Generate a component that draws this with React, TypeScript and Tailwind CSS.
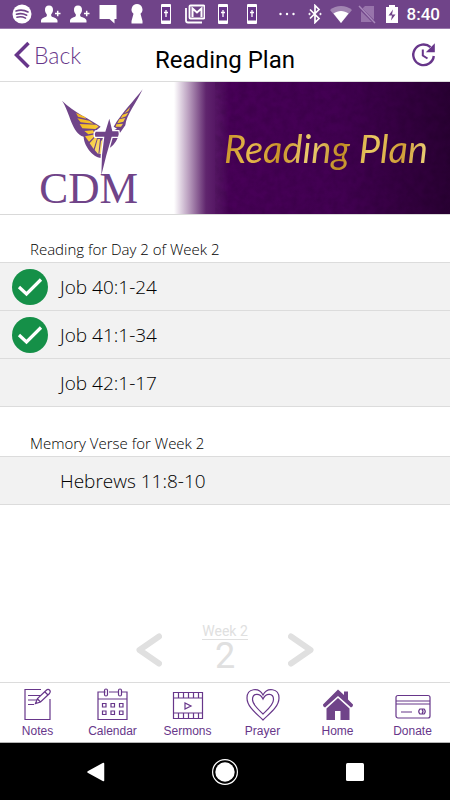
import React from 'react';

interface Reading {
  id: string;
  label: string;
  done: boolean;
}

const readings: Reading[] = [
  { id: 'job-40', label: 'Job 40:1-24', done: true },
  { id: 'job-41', label: 'Job 41:1-34', done: true },
  { id: 'job-42', label: 'Job 42:1-17', done: false },
];

const memoryVerses: Reading[] = [{ id: 'heb-11', label: 'Hebrews 11:8-10', done: false }];

/* ---------- Status bar ---------- */

const AddPersonIcon = () => (
  <svg className="h-5 w-5" viewBox="0 0 20 20" fill="white">
    <path d="M8 1.500c2.800 0 4.200 1.900 4 4.700-.1 1.700-.9 3.200-1.800 4v1.800c.8 1.400 6.300 1.800 6.300 4.800V18.500H0v-1.700c0-3 5-3.400 5.800-4.800v-1.800c-.9-.8-1.700-2.300-1.800-4C3.800 3.400 5.200 1.500 8 1.500z" />
    <path d="M14 9.500h5.500M16.700 6.800v5.400" stroke="white" strokeWidth="1.500" />
  </svg>
);

const CrossPhoneIcon = () => (
  <svg className="h-5 w-5" viewBox="0 0 20 20">
    <rect x="5" y="0" width="10" height="20" rx="1" fill="white" />
    <rect x="6" y="3" width="8" height="13.500" fill="#68358a" />
    <path d="M10 6v7M8 8.500h4" stroke="white" strokeWidth="1.300" />
  </svg>
);

const StatusBar = () => (
  <div className="flex h-[29px] shrink-0 items-center border-b border-[#9a78ac] bg-[#704489] pl-3 pr-[10px] text-white">
    <div className="flex w-[250px] items-center justify-between">
      <svg className="h-5 w-5" viewBox="0 0 20 20">
        <circle cx="10" cy="10" r="9.500" fill="white" />
        <path d="M4 7c4-1.300 8.500-.9 12 1M4.500 10.200c3.500-1 7-.7 10.200 1M5 13.200c3-.8 5.800-.5 8.500.9" fill="none" stroke="#704489" strokeWidth="1.600" strokeLinecap="round" />
      </svg>
      <AddPersonIcon />
      <AddPersonIcon />
      <svg className="h-5 w-5" viewBox="0 0 20 20" fill="white">
        <path d="M1.500 1h17v14h-2v4.500l-5-4.500h-10z" />
      </svg>
      <svg className="h-5 w-5" viewBox="0 0 20 20" fill="white">
        <path d="M10 0a5.500 5.500 0 0 1 3.500 9.700L15.500 17v2.500h-11V17l2-7.300A5.500 5.500 0 0 1 10 0z" />
      </svg>
      <CrossPhoneIcon />
      <svg className="h-5 w-5" viewBox="0 0 20 20" fill="none" stroke="white">
        <path d="M1 4v12.500q0 2 2 2h14" strokeWidth="1.800" />
        <rect x="4.500" y="1.500" width="15" height="13" rx="1" strokeWidth="1.800" />
        <path d="M7.500 13V4.500l4.500 4 4.500-4V13" strokeWidth="2" />
      </svg>
      <CrossPhoneIcon />
      <CrossPhoneIcon />
    </div>
    <svg className="ml-4 h-5 w-[18px]" viewBox="0 0 18 20" fill="white">
      <circle cx="2.500" cy="10" r="1.200" />
      <circle cx="9" cy="10" r="1.200" />
      <circle cx="15.500" cy="10" r="1.200" />
    </svg>
    <div className="ml-auto flex items-center gap-[5px]">
      <svg className="h-5 w-5" viewBox="0 0 20 20" fill="none" stroke="white" strokeWidth="1.700">
        <path d="M5 5.500l9 9-4 4V1.500l4 4-9 9" />
        <circle cx="4.500" cy="10" r=".7" fill="white" strokeWidth="1" />
        <circle cx="15.500" cy="10" r=".7" fill="white" strokeWidth="1" />
      </svg>
      <svg className="h-5 w-[22px]" viewBox="0 0 22 20" fill="white">
        <path d="M0 6C6 .5 16 .5 22 6L11 19z" opacity=".35" />
        <path d="M3.500 9.500C8 6 14 6 18.500 9.500L11 19z" />
      </svg>
      <svg className="h-5 w-5" viewBox="0 0 20 20">
        <path d="M8 2h9v16H4V6z" fill="#9874ab" />
        <path d="M1 2l17 17" stroke="#704489" strokeWidth="3" />
        <path d="M2 2l16 17" stroke="#a98abb" strokeWidth="1.400" />
      </svg>
      <svg className="h-5 w-5" viewBox="0 0 20 20">
        <path d="M7 1h6v2h3v16H4V3h3z" fill="white" />
        <path d="M11 5.500l-4.500 6H10L9 16.500l4.500-6H10z" fill="#704489" />
      </svg>
      <span className="font-['Roboto',sans-serif] text-[17px] font-medium leading-5">8:40</span>
    </div>
  </div>
);

/* ---------- Header and banner ---------- */

const Header = () => (
  <header className="grid h-[53px] shrink-0 grid-cols-[1fr_auto_1fr] items-center border-b border-[#dcdcdc] bg-white px-[14px]">
    <button type="button" className="flex items-center gap-1 text-[#67368a]">
      <svg className="h-7 w-4" viewBox="0 0 16 28" fill="none" stroke="currentColor" strokeWidth="3.500">
        <path d="M14.500 2L2.500 14l12 12" />
      </svg>
      <span className="font-['Lato',sans-serif] text-[23px] font-light leading-7">Back</span>
    </button>
    <h1 className="pt-[10px] font-['Roboto',sans-serif] text-2xl leading-7 text-black">Reading Plan</h1>
    <button type="button" aria-label="History" className="justify-self-end text-[#67368a]">
      <svg className="h-[26px] w-[26px]" viewBox="0 0 26 26" fill="none" stroke="currentColor" strokeWidth="2.400">
        <path d="M20.500 5.200A10.300 10.300 0 1 0 23.800 14" />
        <path d="M24.800 1.200v9h-9z" fill="currentColor" stroke="none" />
        <path d="M12.800 7.500v6l4.700 3" strokeWidth="2" />
      </svg>
    </button>
  </header>
);

const Logo = () => (
  <svg className="h-[132px] w-[110px] shrink-0" viewBox="114 0 330 396" role="img" aria-label="CDM">
    <defs>
      <linearGradient id="wing" x1="0" y1="0" x2="1" y2="1">
        <stop offset="0" stopColor="#f1b51c" />
        <stop offset=".5" stopColor="#f6c62c" />
        <stop offset="1" stopColor="#fbe487" />
      </linearGradient>
    </defs>
    <path d="M186 56C210 92 216 155 251 164C251 187 275 225 304 228L313 160L284 149L302 134C271 111 222 92 186 56z" fill="#704489" />
    <path d="M228 93L254 104L259 110L234 104zM232 109L268 116L280 125L242 121zM239 126L289 128L296 134L286 141L247 139zM253 147L279 145L283 153L265 157zM255 163L279 158L284 163L267 179zM269 184L285 166L291 169L281 201zM284 204L293 171L300 171L295 217zM298 216L303 178L309 170L305 216z" fill="url(#wing)" />
    <path d="M428 22C403 55 364 94 341 134L351 140L331 149L328 199C348 184 353 169 356 158L376 130C379 99 410 61 428 22z" fill="#704489" />
    <path d="M391 74L373 94L385 87zM385 92L368 98L362 109L378 103zM376 108L358 112L352 124L370 119zM369 125L349 127L347 134L363 134z" fill="url(#wing)" />
    <path d="M328 110L337 148H355Q358 156 354 164H335L319 220L304 280L306 220L313 164H286Q282 156 287 149H316z" fill="#704489" stroke="white" strokeWidth="8" paintOrder="stroke" />
    <text x="118" y="362" fontFamily="'Liberation Serif', serif" fontSize="130" fill="#704489">
      CDM
    </text>
  </svg>
);

const Banner = () => (
  <section className="relative flex h-[133px] shrink-0 items-center justify-between border-b border-[#d9d9d9] bg-[linear-gradient(to_right,white_174px,#b89cbd_189px,#5f256d_206px,#480058_230px,#420052_340px,#2a0034_450px)] pl-[38px] pr-[22px]">
    <svg className="absolute inset-y-0 right-0 h-full w-[calc(100%-215px)] opacity-10" aria-hidden="true">
      <filter id="grain">
        <feTurbulence type="fractalNoise" baseFrequency=".12" numOctaves="4" seed="4" />
        <feColorMatrix values="0 0 0 0 0  0 0 0 0 0  0 0 0 0 0  2 0 0 0 -.6" />
      </filter>
      <rect width="100%" height="100%" filter="url(#grain)" />
    </svg>
    <Logo />
    <h2 className="relative bg-[linear-gradient(100deg,#c38b22,#e6b94e,#c99227,#edcf73,#c08a22,#eac963,#cf9c35,#efd681)] bg-clip-text font-['Lato',sans-serif] text-[38px] font-normal italic leading-[48px] text-transparent">
      Reading Plan
    </h2>
  </section>
);

/* ---------- Readings ---------- */

const ReadingList = ({ title, items }: { title: string; items: Reading[] }) => (
  <section className="font-['Open_Sans',sans-serif] font-light text-black">
    <h3 className="px-[30px] pb-[2px] pt-[23px] text-[15px] leading-[22px]">{title}</h3>
    <ul className="divide-y divide-[#dcdcdc] border-y border-[#dcdcdc] bg-[#f2f2f2]">
      {items.map((item) => (
        <li key={item.id}>
          <button type="button" className="flex h-[47px] w-full items-center gap-3 pl-3 text-left text-[19px] leading-7">
            <span className="h-9 w-9">
              {item.done && (
                <svg className="h-9 w-9" viewBox="0 0 36 36">
                  <circle cx="18" cy="18" r="18" fill="#159048" />
                  <path d="M7 18l7.500 7L29 10.500" fill="none" stroke="white" strokeWidth="3.200" />
                </svg>
              )}
            </span>
            {item.label}
          </button>
        </li>
      ))}
    </ul>
  </section>
);

const WeekPager = () => (
  <div className="mt-auto flex items-center justify-center gap-10 pb-[10px] font-['Roboto',sans-serif] text-[#e0e0e0]">
    <button type="button" aria-label="Previous day" className="pt-1">
      <svg className="h-[34px] w-[26px]" viewBox="0 0 26 34" fill="none" stroke="currentColor" strokeWidth="6">
        <path d="M23 3.500L3.500 17 23 30.500" strokeLinecap="round" strokeLinejoin="round" />
      </svg>
    </button>
    <div className="text-center">
      <div className="border-b border-[#e0e0e0] text-sm leading-4">Week 2</div>
      <div className="text-4xl leading-8">2</div>
    </div>
    <button type="button" aria-label="Next day" className="pt-1">
      <svg className="h-[34px] w-[26px]" viewBox="0 0 26 34" fill="none" stroke="currentColor" strokeWidth="6">
        <path d="M3 3.500L22.500 17 3 30.500" strokeLinecap="round" strokeLinejoin="round" />
      </svg>
    </button>
  </div>
);

/* ---------- Tab bar ---------- */

const tabs = [
  {
    label: 'Notes',
    icon: (
      <>
        <path d="M21 3.500H5v30h25V13" />
        <path d="M8 9.500h13M8 14h9M8 18.500h6" />
        <path d="M15.500 17.500l2-5L26 4.500q2-2 3.500-.5t0 3.500L20.500 16zM25 6l3 3M17.500 13l3 3" />
      </>
    ),
  },
  {
    label: 'Calendar',
    icon: (
      <>
        <path d="M10.500 6H3v27.500h29V6h-6M14 6h9M3 13h29" />
        <rect x="9.500" y="3" width="3" height="7" rx="1.500" />
        <rect x="23.500" y="3" width="3" height="7" rx="1.500" />
        <path d="M7.500 17.500h3.500v3.500H7.500zM16 17.500h3.500v3.500H16zM24.500 17.500h3.500v3.500h-3.500zM7.500 25h3.500v3.500H7.500zM16 25h3.500v3.500H16zM24.500 25h3.500v3.500h-3.500z" />
      </>
    ),
  },
  {
    label: 'Sermons',
    icon: (
      <>
        <path d="M3.500 6.500h29v26h-29zM3.500 12h29M3.500 27h29" />
        <path d="M8.500 7v5M13.500 7v5M18.500 7v5M23.500 7v5M28.500 7v5M8.500 27v5M13.500 27v5M18.500 27v5M23.500 27v5M28.500 27v5" />
        <path d="M15 17v6l6-3z" />
      </>
    ),
  },
  {
    label: 'Prayer',
    icon: (
      <>
        <path d="M18 34C12 28 2 21 2 12C2 2 14 1 18 9C22 1 34 2 34 12C34 21 24 28 18 34z" />
        <path d="M18 28C14 24 7.500 19 7.500 13.500C7.500 7 15 6.500 18 13C21 6.500 28.500 7 28.500 13.500C28.500 19 22 24 18 28z" />
      </>
    ),
  },
  {
    label: 'Home',
    icon: (
      <g fill="#704489" stroke="none">
        <path d="M18 3.500L3 18.500q-.5 2 2 3L18 10l13 11.500q2.500-1 2-3l-5-5V5.500H24V9z" />
        <path d="M18 12L6.500 22.500V34H15v-9h5.500v9h9V22.500z" />
      </g>
    ),
  },
  {
    label: 'Donate',
    icon: (
      <>
        <rect x="1" y="9.500" width="34" height="22.500" rx="2" />
        <path d="M1 15h34M1 18h34M6 26h11" />
        <path d="M25 23h4q2.500 2.500 0 5h-4q-2.500-2.500 0-5zM27 23.500q2 2 0 4" />
      </>
    ),
  },
];

const TabBar = () => (
  <nav className="grid h-[61px] shrink-0 grid-cols-6 border-b border-t border-[#dcdcdc] border-b-[#b5b5b5] bg-white">
    {tabs.map((tab) => (
      <a key={tab.label} href={`#${tab.label.toLowerCase()}`} className="flex flex-col items-center pt-1 font-['Liberation_Sans',sans-serif] text-xs leading-4 text-[#67368a]">
        <svg className="h-9 w-9" viewBox="0 1 36 36" fill="none" stroke="currentColor" strokeWidth="1.200">
          {tab.icon}
        </svg>
        {tab.label}
      </a>
    ))}
  </nav>
);

const SystemNav = () => (
  <div className="flex h-[57px] shrink-0 items-center justify-center gap-[104px] bg-black">
    <button type="button" aria-label="System back">
      <svg className="h-[26px] w-[26px]" viewBox="0 0 26 26" fill="white" stroke="white" strokeWidth="1.500" strokeLinejoin="round">
        <path d="M6 13L21.500 4.500v17z" />
      </svg>
    </button>
    <button type="button" aria-label="System home">
      <svg className="h-[26px] w-[26px]" viewBox="0 0 26 26">
        <circle cx="13" cy="13" r="12.400" fill="none" stroke="white" strokeWidth="1.200" />
        <circle cx="13" cy="13" r="9.700" fill="white" />
      </svg>
    </button>
    <button type="button" aria-label="Recent apps">
      <svg className="h-[26px] w-[26px]" viewBox="0 0 26 26" fill="white">
        <rect x="4" y="4" width="18" height="18" rx="1.500" />
      </svg>
    </button>
  </div>
);

const App: React.FC = () => {
  return (
    <div className="flex min-h-screen flex-col bg-white">
      <StatusBar />
      <Header />
      <Banner />
      <main className="flex flex-1 flex-col gap-[2px]">
        <ReadingList title="Reading for Day 2 of Week 2" items={readings} />
        <ReadingList title="Memory Verse for Week 2" items={memoryVerses} />
        <WeekPager />
      </main>
      <TabBar />
      <SystemNav />
    </div>
  );
};

export default App;
